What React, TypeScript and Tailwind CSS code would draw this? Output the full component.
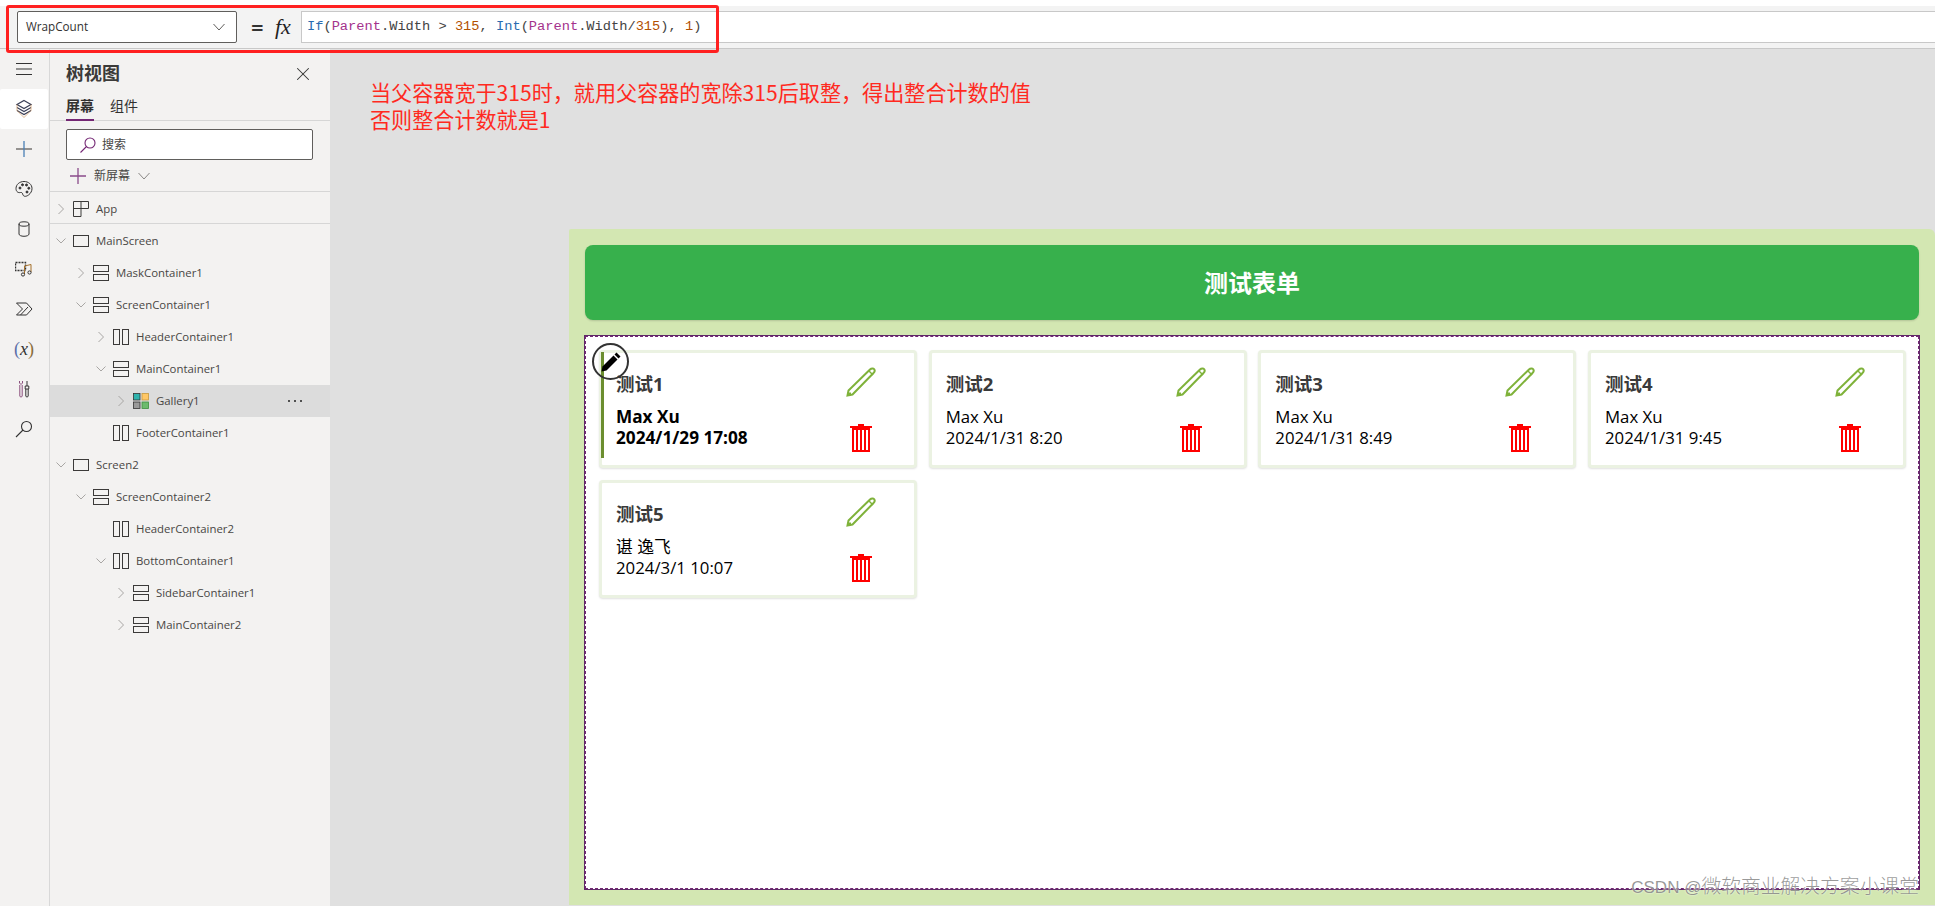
import React from "react";
import { X } from "lucide-react";

const uiFont = "[font-family:'Open_Sans','Noto_Sans_CJK_SC',sans-serif]";

type NodeKind = "app" | "screen" | "stack" | "columns" | "gallery";

const Chevron = ({ open }: { open: boolean }) => (
  <svg width="20" height="16" viewBox="0 0 20 16" fill="none" stroke="#a8a6a4" strokeWidth="1">
    {open ? <path d="M5.5 5.5 L10 10 L14.5 5.5" /> : <path d="M7.5 3 L12.5 8 L7.5 13" />}
  </svg>
);

const TreeIcon = ({ kind }: { kind: NodeKind }) => {
  if (kind === "gallery") {
    return (
      <svg width="16" height="16" viewBox="0 0 16 16">
        <rect x="0.5" y="0.5" width="6.5" height="6.5" fill="#2fb3ad" stroke="#333" strokeWidth="0.8" />
        <rect x="9" y="0.5" width="6.5" height="6.5" fill="#ffc766" stroke="#c89a3c" strokeWidth="0.8" />
        <rect x="0.5" y="9" width="6.5" height="6.5" fill="#9a9a9a" stroke="#333" strokeWidth="0.8" />
        <rect x="9" y="9" width="6.5" height="6.5" fill="#6dbb6d" stroke="#3f8f3f" strokeWidth="0.8" />
      </svg>
    );
  }
  return (
    <svg width="16" height="16" viewBox="0 0 16 16" fill="none" stroke="#3b3a39" strokeWidth="1">
      {kind === "app" && <path d="M0.5 0.5 H15.5 V7.5 H8 V15.5 H0.5 Z M8 0.5 V7.5 M0.5 7.5 H8" />}
      {kind === "screen" && <rect x="0.5" y="2.5" width="15" height="11" />}
      {kind === "stack" && (
        <>
          <rect x="0.5" y="0.5" width="15" height="6" />
          <rect x="0.5" y="9.5" width="15" height="6" />
        </>
      )}
      {kind === "columns" && (
        <>
          <rect x="0.5" y="0.5" width="6" height="15" />
          <rect x="9.5" y="0.5" width="6" height="15" />
        </>
      )}
    </svg>
  );
};

const treeRows: { label: string; level: number; kind: NodeKind; chevron?: "open" | "closed"; selected?: boolean }[] = [
  { label: "MainScreen", level: 0, kind: "screen", chevron: "open" },
  { label: "MaskContainer1", level: 1, kind: "stack", chevron: "closed" },
  { label: "ScreenContainer1", level: 1, kind: "stack", chevron: "open" },
  { label: "HeaderContainer1", level: 2, kind: "columns", chevron: "closed" },
  { label: "MainContainer1", level: 2, kind: "stack", chevron: "open" },
  { label: "Gallery1", level: 3, kind: "gallery", chevron: "closed", selected: true },
  { label: "FooterContainer1", level: 2, kind: "columns" },
  { label: "Screen2", level: 0, kind: "screen", chevron: "open" },
  { label: "ScreenContainer2", level: 1, kind: "stack", chevron: "open" },
  { label: "HeaderContainer2", level: 2, kind: "columns" },
  { label: "BottomContainer1", level: 2, kind: "columns", chevron: "open" },
  { label: "SidebarContainer1", level: 3, kind: "stack", chevron: "closed" },
  { label: "MainContainer2", level: 3, kind: "stack", chevron: "closed" },
];

const levelPad = ["pl-px", "pl-[21px]", "pl-[41px]", "pl-[61px]"];

const TreeRow = ({ row }: { row: (typeof treeRows)[number] }) => (
  <div className={`flex h-8 items-center pr-[27px] ${levelPad[row.level]} ${row.selected ? "bg-[#dcdcdc]" : ""}`}>
    <span className="flex w-5 justify-center">{row.chevron && <Chevron open={row.chevron === "open"} />}</span>
    <span className="ml-0.5 flex">
      <TreeIcon kind={row.kind} />
    </span>
    <span className="ml-[7px] flex-1 text-[11.4px] text-[#484644]">{row.label}</span>
    {row.selected && (
      <svg width="16" height="4" viewBox="0 0 16 4" fill="#222">
        <circle cx="2" cy="2" r="1" />
        <circle cx="8" cy="2" r="1" />
        <circle cx="14" cy="2" r="1" />
      </svg>
    )}
  </div>
);

const railIcons = [
  <svg width="20" height="14" viewBox="0 0 20 14" fill="none" stroke="#333" strokeWidth="1.1">
    <path d="M2 1.5 H18 M2 7 H18 M2 12.5 H18" />
  </svg>,
  <svg width="18" height="20" viewBox="0 0 18 20" fill="none" stroke="#3a3f57" strokeWidth="1.2">
    <path d="M9 1.5 L16 5.5 L9 9.5 L2 5.5 Z" />
    <path d="M2 8.5 L9 12.5 L16 8.5" />
    <path d="M2 11.5 L9 15.5 L16 11.5" />
    <path d="M2 5.5 V11.5 L9 18.5 L16 11.5 V5.5" stroke="#c98a4a" strokeWidth="0.6" />
  </svg>,
  <svg width="18" height="18" viewBox="0 0 18 18" fill="none" strokeWidth="1.3">
    <path d="M1 9 H17" stroke="#605e5c" />
    <path d="M9 1 V17" stroke="#4a7fb5" />
  </svg>,
  <svg width="18" height="18" viewBox="0 0 18 18" fill="none" stroke="#333" strokeWidth="1">
    <path d="M9 1.5 C4.5 1.5 1 4.5 1 8.5 C1 12 3.5 13 5.5 12.5 C7.5 12 7.5 14 8 15 C9 17 11.5 16.5 13.5 15 C15.8 13.3 17 11 17 8.5 C17 4.5 13.5 1.5 9 1.5 Z" />
    <circle cx="5" cy="8" r="1" fill="#333" />
    <circle cx="7.5" cy="4.8" r="1" fill="#333" />
    <circle cx="11.5" cy="5" r="1" fill="#333" />
    <circle cx="13.8" cy="8.2" r="1" fill="#333" />
    <circle cx="12" cy="12" r="1" fill="#333" />
  </svg>,
  <svg width="12" height="16" viewBox="0 0 12 16" fill="none" stroke="#333" strokeWidth="1">
    <ellipse cx="6" cy="3" rx="5" ry="2.2" />
    <path d="M1 3 V13 C1 14.3 3.2 15.3 6 15.3 C8.8 15.3 11 14.3 11 13 V3" />
  </svg>,
  <svg width="18" height="16" viewBox="0 0 18 16" fill="none" stroke="#333" strokeWidth="1">
    <rect x="0.5" y="1.5" width="10" height="8" strokeDasharray="2 1" strokeWidth="1.4" />
    <path d="M9.5 13 V5 L16 3.5 V11" stroke="#a5702a" />
    <circle cx="8" cy="13.5" r="1.6" />
    <circle cx="14.5" cy="11.5" r="1.6" />
  </svg>,
  <svg width="17" height="14" viewBox="0 0 17 14" fill="none" stroke="#333" strokeWidth="1">
    <path d="M0.5 1 H10.5 L16 7 L10.5 13 H0.5 L6.5 7 Z" />
    <path d="M4.5 13 L12 5" />
  </svg>,
  <span className="[font-family:'Liberation_Serif',serif] text-[18px] italic leading-none text-[#333]">
    <span className="text-[#5a6ea8] not-italic">(</span>x<span className="text-[#8a6d3b] not-italic">)</span>
  </span>,
  <svg width="12" height="18" viewBox="0 0 12 18" fill="none" stroke="#333" strokeWidth="1">
    <path d="M1.5 1 V3 L3 4.5 L4.5 3 V1 M1.8 5 V16 C1.8 17.3 4.2 17.3 4.2 16 V5" stroke="#8a4f7d" />
    <path d="M9 1 V6 M7.2 6 H10.8 V9 H7.2 Z M7.8 9 V16 C7.8 17.3 10.2 17.3 10.2 16 V9" />
  </svg>,
  <svg width="18" height="18" viewBox="0 0 18 18" fill="none" stroke="#333" strokeWidth="1.1">
    <circle cx="11.5" cy="6.5" r="5" />
    <path d="M8 10 L1 17" />
  </svg>,
];

const Pencil = () => (
  <svg width="30" height="30" viewBox="0 0 30 30" fill="none" stroke="#7fb23a" strokeWidth="2">
    <path d="M1.5 28.5 L2.5 23.5 L24 2.5 C25.5 1 27.5 1.2 28.2 2.2 C29 3.4 28.8 4.8 27.5 6 L6.5 27.5 Z" />
    <path d="M2 27 L5 27" strokeWidth="3" />
    <path d="M23 4 L27 8" strokeWidth="1.4" />
  </svg>
);

const Trash = () => (
  <svg width="22" height="28" viewBox="0 0 22 28" fill="#ff0000">
    <rect x="8" y="0" width="6" height="2" />
    <rect x="0" y="2" width="22" height="2" />
    <path d="M2 4 H20 V28 H2 Z M4 6 V26 H18 V6 Z" fillRule="evenodd" />
    <rect x="6" y="6" width="2" height="20" />
    <rect x="10" y="6" width="2" height="20" />
    <rect x="14" y="6" width="2" height="20" />
  </svg>
);

const cards = [
  { title: "测试1", name: "Max Xu", time: "2024/1/29 17:08", selected: true },
  { title: "测试2", name: "Max Xu", time: "2024/1/31 8:20" },
  { title: "测试3", name: "Max Xu", time: "2024/1/31 8:49" },
  { title: "测试4", name: "Max Xu", time: "2024/1/31 9:45" },
  { title: "测试5", name: "谌 逸飞", time: "2024/3/1 10:07" },
];

const Card = ({ card }: { card: (typeof cards)[number] }) => (
  <div className="relative flex h-[118px] w-[318px] rounded-[4px] border-[3px] border-[#ebf2e2] bg-white pl-[14px] pr-[33px] shadow-[0_1px_2px_rgba(0,0,0,0.12)]">
    <div className="flex-1 pt-[19px]">
      <div className="text-[18.5px] font-bold leading-6 text-[#3a3a3a]">{card.title}</div>
      <div className={`mt-[10px] leading-[21px] text-black ${card.selected ? "text-[17.2px] font-bold" : "text-[16.8px]"}`}>
        <div>{card.name}</div>
        <div>{card.time}</div>
      </div>
    </div>
    <div className="flex w-10 flex-col items-center pt-[14px]">
      <Pencil />
      <div className="mt-[27px] flex">
        <Trash />
      </div>
    </div>
    {card.selected && (
      <>
        <div className="absolute -left-px -top-px h-[106px] w-[3px] bg-[#6b8e2f]" />
        <div className="absolute -left-[10px] -top-[10px] h-[37px] w-[37px] rounded-full border-[2.5px] border-[#333]">
          <svg width="32" height="32" viewBox="0 0 32 32" fill="#000">
            <path d="M7.5 26.5 L8.5 21.5 L19.5 10.5 L23.5 14.5 L12.5 25.5 Z" />
            <path d="M20.5 9.5 L22.5 7.5 L26.5 11.5 L24.5 13.5 Z" />
          </svg>
        </div>
      </>
    )}
  </div>
);

export default function App() {
  return (
    <div className={`relative flex h-[906px] w-[1935px] flex-col overflow-hidden bg-white ${uiFont}`}>
      <div className="h-[6px] bg-white" />
      <div className="flex h-[43px] items-center border-b border-[#c8c8c8] bg-[#f3f3f3] pl-[17px] box-border">
        <div className="flex h-8 w-[220px] items-center justify-between rounded-[2px] border border-[#605e5c] bg-white pl-2 pr-2.5 text-[11.7px] text-[#323130]">
          <span>WrapCount</span>
          <svg width="14" height="10" viewBox="0 0 14 10" fill="none" stroke="#605e5c" strokeWidth="1">
            <path d="M1.5 2 L7 8 L12.5 2" />
          </svg>
        </div>
        <span className="ml-[14px] w-[18px] text-[22px] font-semibold leading-none text-[#333]">=</span>
        <span className="ml-[6px] w-[26px] [font-family:'Liberation_Serif',serif] text-[22px] italic leading-none text-[#222]">
          fx
        </span>
        <div className="flex h-8 flex-1 items-center border-y border-l border-[#c8c8c8] bg-white pl-[5px] [font-family:'Liberation_Mono',monospace] text-[13.7px] text-[#444]">
          <span>
            <span className="text-[#2a6cb0]">If</span>(<span className="text-[#a4328c]">Parent</span>.Width &gt;{" "}
            <span className="text-[#b35000]">315</span>, <span className="text-[#2a6cb0]">Int</span>(
            <span className="text-[#a4328c]">Parent</span>.Width/<span className="text-[#b35000]">315</span>),{" "}
            <span className="text-[#b35000]">1</span>)
          </span>
        </div>
      </div>

      <div className="flex min-h-0 flex-1">
        <div className="w-[50px] shrink-0 border-r border-[#d8d8d8] bg-[#f3f2f1]">
          {railIcons.map((icon, i) => (
            <div key={i} className={`flex h-10 w-12 items-center justify-center rounded-[2px] ${i === 1 ? "bg-white" : ""}`}>
              {icon}
            </div>
          ))}
        </div>

        <div className="w-[280px] shrink-0 bg-[#f3f2f1] text-[#323130]">
          <div className="flex h-[45px] items-center justify-between pl-4 pr-4 pt-1">
            <span className="text-[18px] font-bold text-[#3b3a39]">树视图</span>
            <X size={22} strokeWidth={1.1} className="text-[#333]" />
          </div>
          <div className="flex h-[27px] items-start gap-4 border-b border-[#d6d6d6] pl-4 text-[14px] leading-[24px]">
            <span className="h-[27px] border-b-[2px] border-[#742774] font-semibold">屏幕</span>
            <span>组件</span>
          </div>
          <div className="ml-4 mt-2 flex h-[31px] w-[247px] items-center rounded-[2px] border border-[#605e5c] bg-white pl-[12px] text-[12px] text-[#484644]">
            <svg width="18" height="18" viewBox="0 0 18 18" fill="none" stroke="#742774" strokeWidth="1.1">
              <circle cx="11" cy="7" r="5" />
              <path d="M7.5 10.5 L1.5 16.5" />
            </svg>
            <span className="ml-[5px]">搜索</span>
          </div>
          <div className="flex h-8 items-center border-b border-[#d6d6d6] pl-5 text-[12px] text-[#484644]">
            <svg width="16" height="16" viewBox="0 0 16 16" fill="none" stroke="#8a4b8a" strokeWidth="1.3">
              <path d="M0 8 H16 M8 0 V16" />
            </svg>
            <span className="ml-2">新屏幕</span>
            <svg className="ml-[7px]" width="14" height="10" viewBox="0 0 14 10" fill="none" stroke="#8a8886" strokeWidth="1">
              <path d="M1.5 2 L7 8 L12.5 2" />
            </svg>
          </div>
          <div className="flex h-[32px] items-center border-b border-[#d6d6d6] pl-px pt-[2px]">
            <span className="flex w-5 justify-center">
              <Chevron open={false} />
            </span>
            <span className="ml-0.5 flex">
              <TreeIcon kind="app" />
            </span>
            <span className="ml-[7px] text-[11.4px] text-[#484644]">App</span>
          </div>
          <div className="pt-px">
            {treeRows.map((row) => (
              <TreeRow key={row.label} row={row} />
            ))}
          </div>
        </div>

        <div className="flex min-w-0 flex-1 flex-col bg-[#e0e0e0]">
          <div className="ml-[40px] mt-[30px] text-[21.1px] leading-[27px] text-[#ff2a1f] [font-family:'Noto_Sans_CJK_SC',sans-serif]">
            <div>当父容器宽于315时，就用父容器的宽除315后取整，得出整合计数的值</div>
            <div>否则整合计数就是1</div>
          </div>
          <div className="ml-[239px] mt-[96px] h-[676px] rounded-tl-[2px] rounded-tr-[6px] bg-[#d3e7b2] px-4 pt-4">
            <div className="flex h-[75px] items-center justify-center rounded-[8px] bg-[#37b04c] text-[24px] font-bold text-white shadow-[0_1px_2px_rgba(0,0,0,0.15)]">
              测试表单
            </div>
            <div className="-mx-px mt-[15px] h-[555px] border border-[#5f2a68]">
              <div className="h-full border border-dashed border-[#742774] bg-white pl-[13px] pt-[13px]">
                <div className="grid grid-cols-[repeat(4,318px)] gap-x-[11.67px] gap-y-3">
                  {cards.map((card) => (
                    <Card key={card.title} card={card} />
                  ))}
                </div>
              </div>
            </div>
          </div>
        </div>
      </div>

      <div className="absolute left-[6px] top-[5px] h-[48px] w-[713px] rounded-[3px] border-[3px] border-[#ff2020]" />
      <div className="absolute bottom-[6px] right-[16px] flex items-baseline text-[rgba(120,120,120,0.75)] [text-shadow:0_0_2px_#fff]">
        <span className="[font-family:'Liberation_Sans',sans-serif] text-[17px] leading-6 whitespace-pre">CSDN @</span>
        <span className="text-[19.8px] font-light leading-6 [font-family:'Noto_Sans_CJK_SC',sans-serif]">微软商业解决方案小课堂</span>
      </div>
    </div>
  );
}
